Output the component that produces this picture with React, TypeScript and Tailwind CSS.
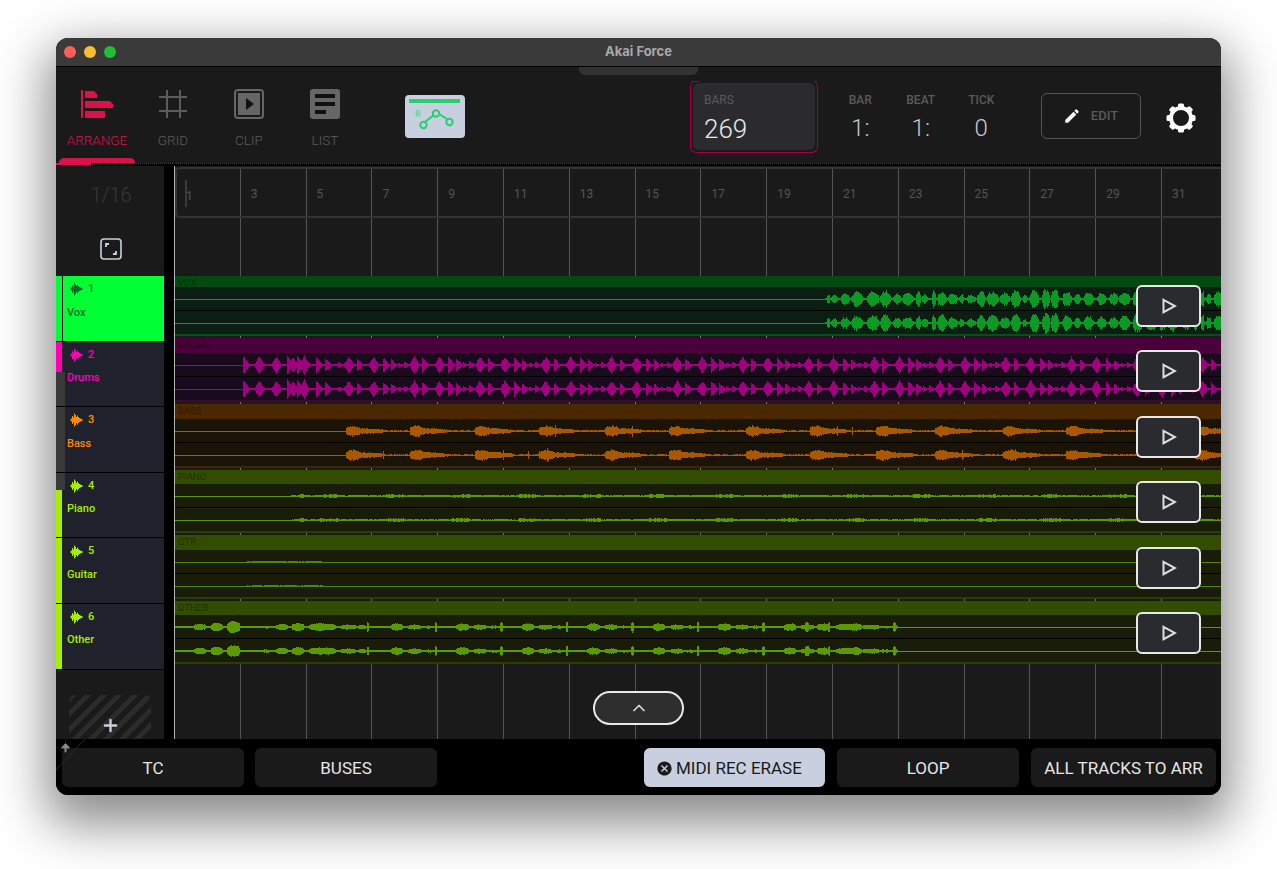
import React from 'react';
import { ChevronUp, Plus } from 'lucide-react';
import { MdCancel, MdEdit } from 'react-icons/md';

function rng(seed: number) {
  let s = seed;
  return () => {
    s = (s * 16807) % 2147483647;
    return (s - 1) / 2147483646;
  };
}

type Env = (x: number, r: () => number) => number;

function buildPath(env: Env, seed: number) {
  const r = rng(seed);
  const c = 12;
  let d = '';
  for (let i = 0; i < 1046; i++) {
    const x = i + 175;
    const a = Math.max(0.5, env(x, r));
    d += `M${i + 0.5} ${(c - a).toFixed(1)}V${(c + a).toFixed(1)}`;
  }
  return d;
}

// blob with quick attack and slow tail
const blob = (x: number, at: number, len: number, amp: number) => {
  const t = x - at;
  if (t < 0 || t > len) return 0;
  const p = t / len;
  const peak = p < 0.35 ? 1 + 0.6 * Math.sin((p / 0.35) * Math.PI) : 1;
  return amp * peak * Math.pow(1 - p, 0.35);
};

const hump = (x: number, at: number, len: number, amp: number, pow = 0.5) => {
  const t = x - at;
  if (t < 0 || t > len) return 0;
  return amp * Math.pow(Math.sin((t / len) * Math.PI), pow);
};

const voxHits = (() => {
  const r = rng(77);
  const out: [number, number, number][] = [];
  let x = 826;
  while (x < 1225) {
    const len = 4 + r() * 9;
    out.push([x, len, 4.5 + r() * 5.5]);
    x += len + r() * 3;
  }
  return out;
})();

const voxEnv: Env = (x, r) => {
  if (x < 825) return 0.5;
  let a = 1.2;
  for (const [at, len, amp] of voxHits) a = Math.max(a, hump(x, at, len, amp, 0.6));
  return a * (0.7 + r() * 0.4);
};

// drum hits inside one 65.7px bar: [offset, amp, symmetric]
const drumBar: [number, number, boolean][] = [
  [0, 8.5, true],
  [8, 7, false],
  [25, 8.5, true],
  [34, 8, false],
  [42, 6, false],
  [49, 2.500, false],
  [55, 3.500, false],
];
const drumHits = (() => {
  const out: [number, number, boolean][] = [
    [243, 9, false],
    [259, 8.5, true],
    [276, 8.5, true],
    [287, 9, false],
    [292, 8, false],
    [297, 9, false],
    [304, 9, true],
    [316, 8, false],
    [325, 7, false],
    [338, 2.500, false],
  ];
  for (let b = 348.3; b < 1230; b += 65.7) {
    for (const [o, a, s] of drumBar) out.push([b + o, a, s]);
  }
  return out;
})();

const drumsEnv: Env = (x, r) => {
  if (x < 243) return 0.5;
  let a = 1;
  for (const [at, amp, sym] of drumHits) {
    const t = x - at;
    if (t < -5 || t > 7) continue;
    const v = sym ? amp * (1 - Math.abs(t) / 5.500) : t < 0 ? 0 : amp * (1 - t / 7);
    a = Math.max(a, v);
  }
  return a * (0.85 + r() * 0.25);
};

const bassStarts = [346, 410, 475, 539, 605, 669, 746, 810, 876, 935, 1003, 1066, 1195];
const bassEnv: Env = (x, r) => {
  if (x < 346) return 0.5;
  let a = 0.6;
  for (const s of bassStarts) a = Math.max(a, blob(x, s, 40, 3.4));
  return a * (0.8 + r() * 0.35) + (r() > 0.992 ? 3 : 0);
};

const pianoEnv: Env = (x, r) => {
  if (x < 290) return 0.5;
  if (x > 299 && x < 304) return 2.400;
  const p = ((x - 320) % 65.7 + 65.7) % 65.7;
  return (p < 18 ? 1.700 : 0.9) * (0.5 + r() * 0.8);
};

const gtrEnv: Env = (x, r) => {
  if (x > 245 && x < 323) return (x % 18 < 9 ? 1.2 : 0.7) * (0.7 + r() * 0.4);
  return 0.5;
};

const otherBlobs = (() => {
  const out: [number, number, number][] = [
    [193, 13, 3],
    [210, 13, 4],
    [226, 14, 5.5],
    [260, 12, 1.5],
    [275, 13, 3],
    [291, 13, 4],
    [308, 28, 3.5],
    [340, 16, 2.5],
    [357, 9, 2],
    [366, 3, 4.5],
  ];
  for (let b = 390; b < 850; b += 65.5) {
    out.push([b, 13, 3.5], [b + 17, 14, 2.5], [b + 32, 12, 1.5], [b + 44, 3, 5]);
  }
  out.push([804, 5, 5], [816, 13, 3.5], [835, 20, 3], [862, 5, 2], [880, 5, 1.5], [892, 5, 2.5]);
  return out;
})();

const otherEnv: Env = (x, r) => {
  let a = x > 897 ? 0.5 : 1;
  for (const [at, len, amp] of otherBlobs) a = Math.max(a, hump(x, at, len, amp, 0.3));
  return a * (0.9 + r() * 0.2);
};

interface Track {
  num: number;
  name: string;
  label: string;
  text: string;
  meter: string;
  wave: string;
  head: string;
  lane: string;
  band: string;
  env: Env;
}

const tracks: Track[] = [
  { num: 1, name: 'Vox', label: 'VOX', text: 'text-[#0d6b27]', meter: 'top-0 bottom-0 bg-[#00ff33]', wave: '#0b9a23', head: 'bg-[#034a12]', lane: 'bg-[#0a1f11]', band: 'bg-[#04501a]', env: voxEnv },
  { num: 2, name: 'Drums', label: 'DRUMS', text: 'text-[#ff00b4]', meter: 'top-0 h-[30px] bg-[#ff00b4]', wave: '#a0007e', head: 'bg-[#4a003a]', lane: 'bg-[#1a0a1d]', band: 'bg-[#3a0a30]', env: drumsEnv },
  { num: 3, name: 'Bass', label: 'BASS', text: 'text-[#ff8a00]', meter: 'hidden', wave: '#aa5800', head: 'bg-[#4b2800]', lane: 'bg-[#1c1307]', band: 'bg-[#3e2308]', env: bassEnv },
  { num: 4, name: 'Piano', label: 'PIANO', text: 'text-[#a4f000]', meter: 'top-[17px] bottom-0 bg-[#a4f000]', wave: '#5a9a00', head: 'bg-[#324c00]', lane: 'bg-[#181c08]', band: 'bg-[#2a3d05]', env: pianoEnv },
  { num: 5, name: 'Guitar', label: 'GTR', text: 'text-[#a4f000]', meter: 'top-0 bottom-0 bg-[#a4f000]', wave: '#4f8800', head: 'bg-[#324c00]', lane: 'bg-[#181c08]', band: 'bg-[#2a3d05]', env: gtrEnv },
  { num: 6, name: 'Other', label: 'OTHER', text: 'text-[#a4f000]', meter: 'top-0 bottom-0 bg-[#a4f000]', wave: '#5a9a00', head: 'bg-[#324c00]', lane: 'bg-[#181c08]', band: 'bg-[#2a3d05]', env: otherEnv },
];

const bars = [1, 3, 5, 7, 9, 11, 13, 15, 17, 19, 21, 23, 25, 27, 29, 31];

function Cells({ labels = false, line = 'border-[#555]' }: { labels?: boolean; line?: string }) {
  return (
    <div className="flex h-full">
      {bars.map((b) => (
        <div key={b} className={`flex w-[65.8px] shrink-0 items-center border-r pl-[10px] pt-[3px] ${line}`}>
          {labels && <span className="text-[12px] text-[#555]">{b === 1 ? '' : b}</span>}
        </div>
      ))}
    </div>
  );
}

function TrackIcon() {
  return (
    <svg width="14" height="14" viewBox="0 0 14 14" stroke="currentColor" strokeWidth="1" fill="none">
      <path d="M0.5 6.500v1M1.500 5.500v3M2.500 3v8M3.500 4.500v5M4.500 0.500v13M5.500 2v10M6.500 4v6M7.500 2.500v9M8.500 4v6M9.500 5v4M10.500 5.500v3M11.500 6v2M12.500 6.500v1" />
    </svg>
  );
}

function TrackHead({ t }: { t: Track }) {
  const selected = t.num === 1;
  return (
    <div className="relative flex h-[65.6px] shrink-0 border-b border-black">
      <div className={`relative w-[9px] shrink-0 ${selected ? 'bg-[#00ff33]' : 'bg-[#3a3a3a]'}`}>
        <div className={`absolute left-0 w-[9px] border-r-[3px] ${selected ? 'border-[#00ff33]' : 'border-[#1f222c]'} ${t.meter}`} />
        {selected && <div className="absolute left-[6px] top-0 bottom-0 w-px bg-black" />}
      </div>
      <div className={`flex-1 ${selected ? 'bg-[#00ff33]' : 'bg-[#1f222c]'} pl-[2px] pt-[5px]`}>
        <div className={`flex items-center gap-[4px] pl-[3px] ${t.text}`}>
          <TrackIcon />
          <span className="text-[11px] font-medium">{t.num}</span>
        </div>
        <div className={`mt-[7px] text-[11px] font-medium ${t.text}`}>{t.name}</div>
      </div>
    </div>
  );
}

function Lane({ env, seed, color, h, divider }: { env: Env; seed: number; color: string; h: string; divider: boolean }) {
  return (
    <div className={`${h} overflow-hidden ${divider ? 'border-b border-black' : ''}`}>
      <svg width="1046" height="24" shapeRendering="crispEdges">
        <path d={buildPath(env, seed)} stroke={color} strokeWidth="1" fill="none" />
      </svg>
    </div>
  );
}

function TrackRow({ t, first }: { t: Track; first: boolean }) {
  return (
    <div className={`relative ${first ? 'h-[60.4px]' : 'h-[65.6px]'}`}>
      {!first && (
        <div className="h-[2px] overflow-hidden">
          <Cells line="border-[#777]" />
        </div>
      )}
      <div className={`${first ? 'h-[11.4px]' : 'h-[14.6px]'} ${t.head} pl-[3px] text-[9.500px] leading-[13px] text-black/40`}>{t.label}</div>
      <div className={t.lane}>
        <Lane env={t.env} seed={t.num * 101} color={t.wave} h="h-[24px]" divider />
        <Lane env={t.env} seed={t.num * 211} color={t.wave} h="h-[23px]" divider={false} />
      </div>
      <div className={`h-[2px] ${t.band}`} />
      <button className={`absolute right-[20px] flex h-[42px] w-[65px] items-center justify-center rounded-md border-2 border-[#e8e8e8] bg-[#2a2b2e] ${first ? 'top-[9px]' : 'top-[13.600px]'}`}>
        <svg width="16" height="16" viewBox="0 0 16 16" fill="none" stroke="#ddd" strokeWidth="2">
          <path d="M2.500 1.800L14 8L2.500 14.200Z" />
        </svg>
      </button>
    </div>
  );
}

function Tab({ label, active, children }: { label: string; active?: boolean; children: React.ReactNode }) {
  return (
    <div className="relative flex w-[76px] flex-col items-center pt-[22px]">
      <div className="flex h-[30px] items-center justify-center">{children}</div>
      <span className={`mt-[12px] text-[13.500px] font-light leading-[18px] ${active ? 'text-[#d9134a]' : 'text-[#5c5c5c]'}`}>{label}</span>
      {active && <div className="absolute bottom-0 left-0 h-[5px] w-[76px] rounded-t-lg bg-[#d9134a]" />}
    </div>
  );
}

function Readout({ label, value }: { label: string; value: string }) {
  return (
    <div className="flex w-[60.500px] flex-col items-center">
      <span className="text-[12px] font-medium text-[#5a5a5a]">{label}</span>
      <span className="mt-[4px] text-[24px] font-light leading-[30px] text-[#c8c8c8]">{value}</span>
    </div>
  );
}

function Gear() {
  const teeth = [0, 45, 90, 135, 180, 225, 270, 315];
  return (
    <svg width="30" height="30" viewBox="0 0 30 30">
      {teeth.map((a) => (
        <rect key={a} x="12" y="0.500" width="6" height="5" rx="1.500" fill="#fff" transform={`rotate(${a} 15 15)`} />
      ))}
      <circle cx="15" cy="15" r="10" fill="none" stroke="#fff" strokeWidth="4" />
    </svg>
  );
}

function BottomButton({ label, className }: { label: string; className: string }) {
  return (
    <button className={`flex h-[39px] items-center justify-center rounded-md bg-[#1a1a1a] pt-[2px] text-[17px] text-[#e6e6e6] ${className}`}>{label}</button>
  );
}

export default function App() {
  return (
    <div className="h-[869px] w-[1277px] overflow-hidden bg-white pl-[56px] pt-[38px] font-[Roboto,sans-serif]">
      <div className="relative flex h-[757px] w-[1165px] flex-col overflow-hidden rounded-[12px] bg-black shadow-[0_20px_50px_10px_rgba(0,0,0,0.45)]">
        {/* Title bar */}
        <div className="relative flex h-[29px] shrink-0 items-center justify-center border-b border-black bg-[#3a3a3a]">
          <div className="absolute left-[8px] top-[8px] flex gap-[8px]">
            <span className="h-[12px] w-[12px] rounded-full bg-[#ff5f57]" />
            <span className="h-[12px] w-[12px] rounded-full bg-[#febc2e]" />
            <span className="h-[12px] w-[12px] rounded-full bg-[#1fc034]" />
          </div>
          <span className="font-[Inter,sans-serif] text-[13px] font-bold text-[#a8a8a8]">Akai Force</span>
        </div>

        {/* Toolbar */}
        <div className="relative flex h-[96px] shrink-0 bg-[#1a1a1a] pl-[3px]">
          <div className="absolute left-[523px] top-0 h-[8px] w-[119px] rounded-b-md bg-[#333]" />
          <Tab label="ARRANGE" active>
            <svg width="34" height="30" viewBox="0 0 34 30" fill="#d9134a">
              <rect x="1" y="1" width="2" height="28" />
              <path d="M5 2h9l3 3v4H5z" />
              <path d="M5 12h25l3 3v4H5z" />
              <path d="M5 22h20l0 7H5z" />
            </svg>
          </Tab>
          <Tab label="GRID">
            <svg width="30" height="30" viewBox="0 0 30 30" stroke="#5c5c5c" strokeWidth="2" fill="none">
              <path d="M9 1v28M22 1v28M1 8h28M1 22h28" />
            </svg>
          </Tab>
          <Tab label="CLIP">
            <svg width="30" height="30" viewBox="0 0 30 30">
              <rect x="1" y="1" width="28" height="28" rx="3" fill="none" stroke="#666" strokeWidth="2" />
              <rect x="4" y="4" width="22" height="22" fill="#666" />
              <path d="M12 9l8 6-8 6z" fill="#111" />
            </svg>
          </Tab>
          <Tab label="LIST">
            <svg width="30" height="30" viewBox="0 0 30 30">
              <rect x="0" y="0" width="30" height="30" rx="3" fill="#666" />
              <rect x="5" y="5" width="20" height="4" fill="#111" />
              <rect x="5" y="13" width="20" height="4" fill="#111" />
              <rect x="5" y="21" width="11" height="4" fill="#111" />
            </svg>
          </Tab>

          <div className="ml-[42px] mt-[28px] h-[43px] w-[60px]">
            <svg width="60" height="43" viewBox="0 0 60 43">
              <rect width="60" height="43" rx="4" fill="#c8d0e0" />
              <rect x="4" y="4" width="51" height="4" fill="#2ecc71" />
              <text x="10" y="22" fontSize="9" fontWeight="700" fill="#5fdc90">R</text>
              <path d="M20 27L29 20M34 19L42 24" stroke="#2ecc71" strokeWidth="2" />
              <circle cx="18.500" cy="30" r="3.200" fill="none" stroke="#2ecc71" strokeWidth="2" />
              <circle cx="31" cy="18.500" r="3.200" fill="none" stroke="#2ecc71" strokeWidth="2" />
              <circle cx="44.500" cy="27" r="3.200" fill="none" stroke="#2ecc71" strokeWidth="2" />
            </svg>
          </div>

          <div className="relative ml-[225px] mt-[14px] h-[72px] w-[128px] rounded-md border-x border-b border-[#a8003f] p-[2px]">
            <span className="absolute top-0 left-0 h-px w-[8px] bg-[#a8003f]" />
            <span className="absolute top-0 right-0 h-px w-[2px] bg-[#a8003f]" />
            <div className="flex h-full flex-col rounded-md bg-[#2b2b2d] pl-[11px] pt-[9px]">
              <span className="text-[12px] leading-[16px] text-[#5a5a5a]">BARS</span>
              <span className="mt-[6px] text-[26px] font-light leading-[30px] text-[#e8e8e8]">269</span>
            </div>
          </div>

          <div className="ml-[12px] mt-[24px] flex h-[50px]">
            <Readout label="BAR" value="1:" />
            <Readout label="BEAT" value="1:" />
            <Readout label="TICK" value="0" />
          </div>

          <button className="ml-[29px] mt-[26px] flex h-[46px] w-[100px] items-center justify-center gap-[10px] rounded-md border border-[#555]">
            <MdEdit size={18} color="#fff" />
            <span className="text-[13px] font-medium text-[#5a5a5a]">EDIT</span>
          </button>

          <div className="ml-[25px] mt-[36px]">
            <Gear />
          </div>
        </div>

        {/* Separator under toolbar */}
        <div className="relative h-[3px] shrink-0 border-t border-dotted border-[#444] bg-black">
          <div className="absolute left-0 top-[-1px] h-[2px] w-[35px] bg-[#d9134a]" />
        </div>

        {/* Main */}
        <div className="relative flex h-[573px] shrink-0 overflow-hidden">
          <div className="flex w-[108px] shrink-0 flex-col bg-[#1a1a1a]">
            <div className="flex h-[110px] shrink-0 flex-col items-center pl-[2px] pt-[16px]">
              <span className="text-[20px] font-light leading-[26px] text-[#383838]">1/16</span>
              <svg className="mt-[30px]" width="22" height="22" viewBox="0 0 22 22" fill="none" stroke="#c8d0e0">
                <rect x="1" y="1" width="20" height="20" rx="3" strokeWidth="1.600" />
                <path d="M6 9V6h3M16 13v3h-3" strokeWidth="1.800" />
              </svg>
            </div>
            {tracks.map((t) => (
              <TrackHead key={t.num} t={t} />
            ))}
            <div className="flex min-h-0 flex-1 justify-center overflow-hidden pt-[25px]">
              <div className="flex h-[60px] w-[82px] justify-center rounded-t-md bg-[repeating-linear-gradient(135deg,#2b2b2b_0,#2b2b2b_5px,#1a1a1a_5px,#1a1a1a_11px)] pt-[21px]">
                <Plus size={19} strokeWidth={3} color="#c8d0e0" />
              </div>
            </div>
          </div>

          <div className="w-[10px] shrink-0 bg-black" />

          <div className="w-[1047px] shrink-0 border-l border-[#b5b5b5] bg-[#1a1a1a]">
            <div className="relative h-[110px] overflow-hidden">
              <div className="mt-px h-[51px] rounded-l-md border-y-2 border-[#333]">
                <Cells labels />
              </div>
              <div className="h-[58px]">
                <Cells />
              </div>
              <span className="absolute left-0 top-px h-[51px] w-[2px] rounded-l-md bg-[#333]" />
              <span className="absolute left-[10px] top-[14px] h-[27px] w-[2px] bg-[#3a3a3a]" />
              <span className="absolute left-[11px] top-[21px] text-[12px] text-[#555]">1</span>
            </div>
            {tracks.map((t, i) => (
              <TrackRow key={t.num} t={t} first={i === 0} />
            ))}
            <div className="h-[75px]">
              <Cells />
            </div>
          </div>

          <button className="absolute left-[537px] top-[525px] flex h-[34px] w-[91px] items-center justify-center rounded-full border-2 border-[#e8e8e8] bg-[#2e2e2e]">
            <ChevronUp size={20} strokeWidth={2} color="#ddd" />
          </button>
        </div>

        {/* Bottom bar */}
        <div className="relative flex h-[56px] shrink-0 items-start gap-[11px] bg-black pl-[6px] pt-[9px]">
          <BottomButton label="TC" className="w-[182px]" />
          <BottomButton label="BUSES" className="w-[182px]" />
          <button className="ml-[196px] flex h-[39px] w-[181px] items-center gap-[3px] rounded-md bg-[#c8d0e0] pl-[12px] pt-[2px] text-[17px] text-[#1a1a1a]">
            <MdCancel size={17} />
            MIDI REC ERASE
          </button>
          <BottomButton label="LOOP" className="ml-[1px] w-[182px]" />
          <BottomButton label="ALL TRACKS TO ARR" className="ml-[1px] w-[185px]" />
          <svg className="absolute left-0 top-0" width="30" height="32" viewBox="0 0 30 32" fill="none">
            <path d="M29 0L0 31" stroke="#2a2a2a" />
            <path d="M9 13V9H5.500L9.500 4.500L13.500 9H10V13Z" fill="#888" stroke="#888" />
          </svg>
        </div>
      </div>
    </div>
  );
}
